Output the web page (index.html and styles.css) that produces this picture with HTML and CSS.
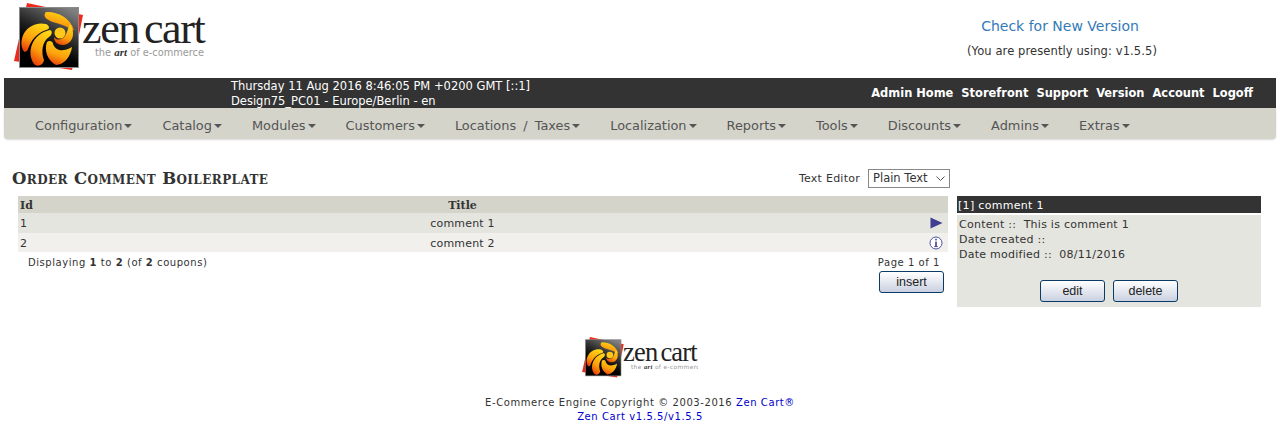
FILE: index.html
```html
<!DOCTYPE html>
<html lang="en">
<head>
    <meta charset="UTF-8">
    <title>Order Comment Boilerplate</title>
    <link rel="stylesheet" href="styles.css">
</head>
<body>
    <svg class="defs" width="0" height="0">
        <defs>
            <linearGradient id="tile" x1="0.8" y1="0" x2="0.3" y2="1">
                <stop offset="0" stop-color="#808080"/>
                <stop offset="0.45" stop-color="#262626"/>
                <stop offset="0.7" stop-color="#000"/>
            </linearGradient>
            <linearGradient id="flame" x1="0.7" y1="0" x2="0.3" y2="1">
                <stop offset="0" stop-color="#ffd816"/>
                <stop offset="0.6" stop-color="#fca00c"/>
                <stop offset="1" stop-color="#ea420a"/>
            </linearGradient>
            <g id="logo">
                <polygon points="27,3 83,15 72,70 14,61" fill="#ee2a1c"/>
                <rect x="19.5" y="7.5" width="59" height="60" fill="url(#tile)" stroke="#8a8a8a"/>
                <path d="M46 12 C56 11 70 17 74 30 C72 31 70 29 67 27 C60 23 52 23 47 19 C44 17 44 14 46 12Z" fill="url(#flame)"/>
                <path d="M23 50 C17 36 30 20 46 24 C50 26 50 29 46 30 C37 33 31 40 28 49 C27 52 24 53 23 50Z" fill="url(#flame)"/>
                <path d="M34 64 C26 52 32 34 50 30 C53 31 52 35 49 37 C42 42 41 52 44 60 C43 66 37 67 34 64Z" fill="url(#flame)"/>
                <path d="M56 65 C47 60 44 50 47 42 C49 40 53 41 53 44 C55 50 62 53 72 47 C71 56 64 65 56 65Z" fill="url(#flame)"/>
                <path d="M70 24 C76 33 73 44 63 45 C58 45 54 42 54 37 C57 41 62 40 65 36 C67 33 68 28 70 24Z" fill="url(#flame)"/>
                <circle cx="60" cy="33" r="5.5" fill="#ffc81a"/>
                <text x="82" y="43" class="logo-name">zen cart</text>
                <text x="95" y="56" class="logo-tag">the <tspan class="logo-art">art</tspan> of e-commerce</text>
            </g>
        </defs>
    </svg>

    <div class="top">
        <svg class="logo-big" viewBox="14 3 192 68"><use href="#logo"/></svg>
        <div class="version">
            <a href="#">Check for New Version</a>
            <p>(You are presently using: v1.5.5)</p>
        </div>
    </div>

    <div class="bar">
        <div class="bar-info">
            <div>Thursday 11 Aug 2016 8:46:05 PM +0200 GMT [::1]</div>
            <div>Design75_PC01 - Europe/Berlin - en</div>
        </div>
        <div class="bar-links">
            <a href="#">Admin Home</a>
            <a href="#">Storefront</a>
            <a href="#">Support</a>
            <a href="#">Version</a>
            <a href="#">Account</a>
            <a href="#">Logoff</a>
        </div>
    </div>

    <ul class="nav">
        <li>Configuration</li>
        <li>Catalog</li>
        <li>Modules</li>
        <li>Customers</li>
        <li>Locations / Taxes</li>
        <li>Localization</li>
        <li>Reports</li>
        <li>Tools</li>
        <li>Discounts</li>
        <li>Admins</li>
        <li>Extras</li>
    </ul>

    <div class="heading-row">
        <h1>Order Comment Boilerplate</h1>
        <div class="editor">
            <span>Text Editor</span>
            <div class="select">Plain Text
                <svg width="9" height="5" viewBox="0 0 9 5"><path d="M0.5 0.5 L4.5 4.5 L8.5 0.5" fill="none" stroke="#555"/></svg>
            </div>
        </div>
    </div>

    <div class="main">
        <div class="listing">
            <table>
                <tr class="head">
                    <th class="col-id">Id</th>
                    <th>Title</th>
                    <th class="col-act"></th>
                </tr>
                <tr class="row-on">
                    <td>1</td>
                    <td class="title">comment 1</td>
                    <td class="col-act">
                        <svg width="13" height="12" viewBox="0 0 13 12"><path d="M0.5 0.5 L12.5 6 L0.5 11.5Z" fill="#3f3f90"/></svg>
                    </td>
                </tr>
                <tr class="row-off">
                    <td>2</td>
                    <td class="title">comment 2</td>
                    <td class="col-act">
                        <svg width="14" height="14" viewBox="0 0 14 14">
                            <circle cx="7" cy="7" r="6" fill="#fff" stroke="#4a58a0" stroke-width="1"/>
                            <rect x="6.2" y="5.6" width="1.6" height="5" fill="#3f3f90"/>
                            <rect x="5.2" y="10.2" width="3.6" height="0.9" fill="#3f3f90"/>
                            <rect x="6.2" y="2.8" width="1.6" height="1.6" fill="#3f3f90"/>
                        </svg>
                    </td>
                </tr>
            </table>
            <div class="paging">
                <span>Displaying <b>1</b> to <b>2</b> (of <b>2</b> coupons)</span>
                <span>Page 1 of 1</span>
            </div>
            <div class="insert-row"><button class="btn">insert</button></div>
        </div>

        <div class="side">
            <div class="side-head">[1] comment 1</div>
            <div class="side-body">
                <div>Content ::&nbsp; This is comment 1</div>
                <div>Date created ::</div>
                <div>Date modified ::&nbsp; 08/11/2016</div>
                <div class="side-btns">
                    <button class="btn">edit</button>
                    <button class="btn">delete</button>
                </div>
            </div>
        </div>
    </div>

    <div class="footer">
        <svg class="logo-small" viewBox="14 3 192 68"><use href="#logo"/></svg>
        <div>E-Commerce Engine Copyright © 2003-2016 <a href="#">Zen Cart®</a></div>
        <div><a href="#">Zen Cart v1.5.5/v1.5.5</a></div>
    </div>
</body>
</html>
```

FILE: styles.css
```css
body {
    margin: 0;
    padding: 0 2px 0 4px;
    font-family: "DejaVu Sans", Verdana, sans-serif;
    font-size: 11px;
    color: #333;
    background-color: #fff;
}
.defs {
    position: absolute;
}
.logo-name {
    font-family: "Liberation Serif", serif;
    font-size: 44px;
    letter-spacing: -1.4px;
    word-spacing: -4.5px;
    fill: #222;
}
.logo-tag {
    font-family: "DejaVu Sans", sans-serif;
    font-size: 9.8px;
    fill: #999;
}
.logo-art {
    font-family: "Liberation Serif", serif;
    font-weight: bold;
    font-style: italic;
    font-size: 11px;
    fill: #333;
}
.top {
    display: flex;
    justify-content: space-between;
    height: 78px;
}
.logo-big {
    width: 192px;
    height: 68px;
    margin: 3px 0 0 10px;
}
.version {
    width: 320px;
    margin-right: 56px;
    text-align: center;
    padding-top: 18px;
}
.version a {
    color: #337ab7;
    font-size: 14px;
    text-decoration: none;
}
.version p {
    margin: 10px 0 0;
    padding-left: 4px;
    font-size: 11.5px;
    letter-spacing: 0.1px;
}
.bar {
    display: flex;
    justify-content: space-between;
    align-items: center;
    height: 30px;
    background-color: #333;
    color: #fff;
}
.bar-info {
    margin-left: 227px;
    padding-top: 2px;
    font-size: 11.5px;
    line-height: 15px;
}
.bar-links {
    display: flex;
    gap: 8px;
    margin-right: 23px;
    font-weight: bold;
    font-size: 11.45px;
}
.bar-links a {
    color: #fff;
    text-decoration: none;
}
.nav {
    display: flex;
    box-sizing: border-box;
    height: 31px;
    margin: 0;
    padding: 4px 0 0 16px;
    list-style: none;
    align-items: center;
    background-color: #d4d4cb;
    border-radius: 0 0 4px 4px;
    box-shadow: 0 1px 2px rgba(0,0,0,0.15);
    font-size: 12.9px;
    word-spacing: 3px;
    color: #555;
}
.nav li {
    padding: 0 15px;
}
.nav li::after {
    content: "";
    display: inline-block;
    margin-left: 2px;
    vertical-align: 2px;
    border-top: 4px solid #555;
    border-left: 4px solid transparent;
    border-right: 4px solid transparent;
}
.heading-row {
    display: flex;
    justify-content: space-between;
    align-items: center;
    width: 946px;
    height: 20px;
    margin-top: 29px;
}
h1 {
    margin: 0 0 0 8px;
    font-family: "DejaVu Serif", serif;
    font-variant: small-caps;
    font-size: 16.5px;
    letter-spacing: 0.4px;
    font-weight: bold;
}
.editor {
    display: flex;
    align-items: center;
    gap: 8px;
    letter-spacing: 0.25px;
}
.select {
    display: flex;
    justify-content: space-between;
    align-items: center;
    width: 72px;
    height: 17px;
    padding: 0 4px;
    border: 1px solid #888;
    font-size: 11.5px;
    letter-spacing: 0;
}
.main {
    display: flex;
    align-items: flex-start;
    margin-top: 8px;
}
.listing {
    width: 930px;
    margin-left: 14px;
}
table {
    width: 100%;
    border-collapse: collapse;
    table-layout: fixed;
}
th, td {
    padding: 0 2px;
    text-align: left;
}
th {
    text-align: center;
    height: 17px;
    padding-top: 1px;
    box-sizing: border-box;
    font-family: "DejaVu Serif", serif;
    font-size: 11px;
}
th.col-id {
    text-align: left;
}
td {
    font-size: 11px;
    letter-spacing: 0.2px;
}
.head {
    background-color: #d4d4cb;
}
.row-on {
    background-color: #e5e5df;
    height: 20px;
}
.row-off {
    background-color: #f1f0ec;
    height: 19px;
}
.row-off td {
    padding-top: 1px;
    box-sizing: border-box;
}
.col-id {
    width: 40px;
}
.title {
    text-align: center;
}
td.col-act, th.col-act {
    width: 81px;
    text-align: right;
    padding-right: 5px;
    line-height: 0;
}
.paging {
    display: flex;
    justify-content: space-between;
    padding: 5px 8px 0 10px;
    font-size: 10px;
    letter-spacing: 0.55px;
}
.insert-row {
    display: flex;
    justify-content: flex-end;
    padding: 3px 4px 0 0;
}
.btn {
    width: 65px;
    height: 22px;
    padding: 0;
    border: 1px solid #0b3a66;
    border-radius: 3px;
    background: linear-gradient(#fff, #c9d0e0);
    font-family: "Liberation Sans", Arial, sans-serif;
    font-size: 12.5px;
    color: #222;
}
.side {
    width: 304px;
    margin-left: 9px;
}
.side-head {
    height: 17px;
    line-height: 19px;
    padding-left: 1px;
    background-color: #333;
    color: #fff;
    letter-spacing: 0.3px;
}
.side-body {
    height: 92px;
    margin-top: 2px;
    padding: 2px 2px 0;
    background-color: #e5e5df;
    line-height: 15px;
    box-sizing: border-box;
    letter-spacing: 0.25px;
}
.side-btns {
    display: flex;
    justify-content: center;
    gap: 8px;
    margin-top: 18px;
    letter-spacing: 0;
}
.footer {
    margin-top: 30px;
    text-align: center;
    font-size: 10px;
    letter-spacing: 0.58px;
    line-height: 14px;
}
.footer a {
    color: #00c;
    text-decoration: none;
}
.logo-small {
    display: block;
    width: 116px;
    height: 41px;
    margin: 0 auto 18px;
}
```
